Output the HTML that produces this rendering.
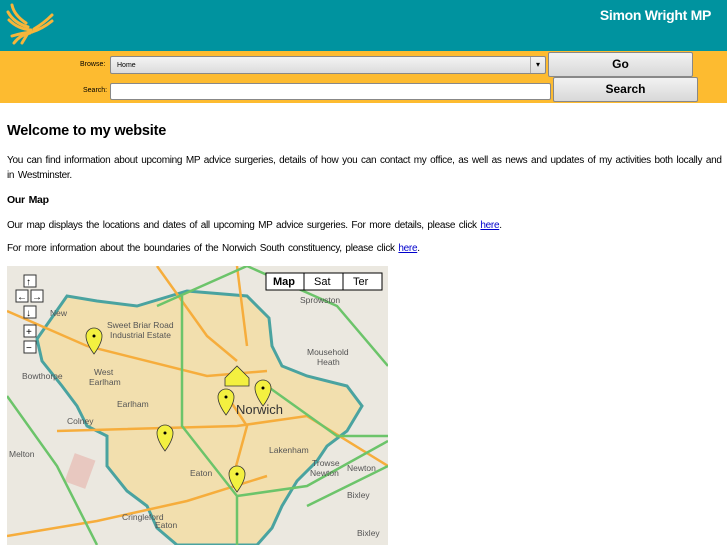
<!DOCTYPE html>
<html><head><meta charset="utf-8"><style>
*{margin:0;padding:0;box-sizing:border-box}
body{width:727px;height:545px;overflow:hidden;background:#fff;font-family:"Liberation Sans",sans-serif;color:#000;position:relative}
#hd{position:absolute;left:0;top:0;width:727px;height:51px;background:#00939f}
#hd .t{position:absolute;right:16px;top:7px;color:#fff;font-weight:bold;font-size:14px;letter-spacing:-0.3px}
#bar{position:absolute;left:0;top:51px;width:727px;height:52px;background:#fdbb30}
.lab{position:absolute;font-size:7px;right:620px}
.sel{position:absolute;left:110px;top:5px;width:436px;height:18px;background:linear-gradient(#f4f4f4,#dcdcdc);border:1px solid #888;border-radius:2px;font-size:7px;padding:5px 6px}
.sel .ar{position:absolute;right:0;top:0;width:15px;height:16px;border-left:1px solid #aaa;font-size:8px;text-align:center;line-height:16px}
.inp{position:absolute;left:110px;top:32px;width:441px;height:17px;background:#fff;border:1px solid #888;border-radius:2px}
.btn{position:absolute;height:25px;background:linear-gradient(#f2f2f2,#d8d8d8);border:1px solid #888;border-radius:2px;font-size:12px;font-weight:bold;text-align:center;line-height:23px}
h1{position:absolute;top:123px;left:7px;font-size:14.5px;letter-spacing:-0.2px}
p{position:absolute;left:7px;font-size:10px;line-height:15px;letter-spacing:-0.3px;word-spacing:1.2px;width:725px;white-space:nowrap}
a{color:#00c}
</style></head><body>
<div id="hd">
<svg width="54" height="46" viewBox="0 0 54 46" style="position:absolute;left:2px;top:1px">
<g fill="none" stroke="#f7b53a" stroke-width="3" stroke-linecap="round">
<path d="M10 4 Q12 14 24 22"/><path d="M6 11 Q12 22 26 26"/><path d="M7 19 Q16 28 29 29"/>
<path d="M50 14 Q42 22 32 28"/><path d="M50 20 Q40 28 30 31"/>
<path d="M30 31 Q20 32 10 35"/><path d="M28 32 Q18 34 12 42"/><path d="M26 32 L20 42"/>
</g></svg>
<div class="t">Simon Wright MP</div></div>
<div id="bar">
<div class="lab" style="top:10px;left:80px">Browse:</div>
<div class="sel">Home<div class="ar">▾</div></div>
<div class="btn" style="left:548px;top:1px;width:145px">Go</div>
<div class="lab" style="top:36px;left:83px">Search:</div>
<div class="inp"></div>
<div class="btn" style="left:553px;top:26px;width:145px">Search</div>
</div>
<h1>Welcome to my website</h1>
<p style="top:153px">You can find information about upcoming MP advice surgeries, details of how you can contact my office, as well as news and updates of my activities both locally and<br>in Westminster.</p>
<p style="top:193px;font-weight:bold;font-size:10.5px">Our Map</p>
<p style="top:218px">Our map displays the locations and dates of all upcoming MP advice surgeries. For more details, please click <a href="#">here</a>.</p>
<p style="top:241px">For more information about the boundaries of the Norwich South constituency, please click <a href="#">here</a>.</p>
<svg width="381" height="279" viewBox="0 0 381 279" style="position:absolute;left:7px;top:266px" font-family="Liberation Sans" font-size="8.5" fill="#555">
<rect width="381" height="279" fill="#ebe8e0"/>
<rect x="62" y="190" width="22" height="30" fill="#e8c8c0" transform="rotate(20 73 205)"/>
<path d="M30 73 L60 30 L90 35 L130 40 L180 25 L240 30 L262 52 L265 80 L275 100 L300 110 L340 120 L355 140 L340 165 L320 180 L310 195 L290 215 L275 240 L265 262 L250 279 L170 279 L150 262 L140 240 L120 225 L100 200 L100 170 L80 160 L70 140 L55 120 L35 95 Z" fill="#f2dfae" stroke="#4aa3a0" stroke-width="3"/>
<g fill="none" stroke="#f6ad3c" stroke-width="2.5">
<path d="M0 45 L80 80 L200 110 L260 105"/><path d="M50 165 L230 160 L300 150 L381 200"/>
<path d="M0 270 L90 255 L180 235 L260 210"/><path d="M150 0 L200 70 L230 95"/><path d="M230 0 L240 80"/>
<path d="M220 130 L240 160 L225 215"/>
</g>
<g fill="none" stroke="#6cc46a" stroke-width="2.5">
<path d="M0 130 L50 200 L90 279"/><path d="M175 30 L175 160 L230 230 L230 279"/><path d="M150 40 L240 0 L330 40 L381 100"/><path d="M230 230 L300 220 L381 175"/><path d="M300 240 L381 200"/><path d="M260 120 L330 170 L381 170"/>
</g>
<rect x="259" y="7" width="116" height="17" fill="#fff" stroke="#000"/>
<line x1="297" y1="7" x2="297" y2="24" stroke="#000"/><line x1="336" y1="7" x2="336" y2="24" stroke="#000"/>
<text x="266" y="19" font-size="11" font-weight="bold" fill="#000">Map</text><text x="307" y="19" font-size="11" fill="#000">Sat</text><text x="346" y="19" font-size="11" fill="#000">Ter</text>
<g fill="#fff" stroke="#333"><rect x="17" y="9" width="12" height="12"/><rect x="9" y="24" width="12" height="12"/><rect x="24" y="24" width="12" height="12"/><rect x="17" y="40" width="12" height="12"/><rect x="17" y="59" width="12" height="12"/><rect x="17" y="75" width="12" height="12"/></g>
<g fill="#000" font-size="10"><text x="19" y="19">↑</text><text x="10" y="34">←</text><text x="25" y="34">→</text><text x="19" y="50">↓</text><text x="19" y="69">+</text><text x="19" y="85">−</text></g>
<text x="100" y="62">Sweet Briar Road</text><text x="103" y="72">Industrial Estate</text><text x="293" y="37">Sprowston</text><text x="300" y="89">Mousehold</text><text x="310" y="99">Heath</text>
<text x="15" y="113">Bowthorpe</text><text x="87" y="109">West</text><text x="82" y="119">Earlham</text><text x="110" y="141">Earlham</text><text x="60" y="158">Colney</text>
<text x="2" y="191">Melton</text><text x="183" y="210">Eaton</text><text x="262" y="187">Lakenham</text><text x="305" y="200">Trowse</text><text x="303" y="210">Newton</text>
<text x="115" y="254">Cringleford</text><text x="148" y="262">Eaton</text><text x="340" y="232">Bixley</text><text x="350" y="270">Bixley</text><text x="340" y="205">Newton</text>
<text x="229" y="148" font-size="13" fill="#333">Norwich</text><text x="43" y="50">New</text>
<g fill="#f3f040" stroke="#333" stroke-width="0.8">
<path d="M79 70 a8 8 0 0 1 16 0 Q95 77 87 88 Q79 77 79 70Z"/>
<path d="M211 131 a8 8 0 0 1 16 0 Q227 138 219 149 Q211 138 211 131Z"/>
<path d="M248 122 a8 8 0 0 1 16 0 Q264 129 256 140 Q248 129 248 122Z"/>
<path d="M150 167 a8 8 0 0 1 16 0 Q166 174 158 185 Q150 174 150 167Z"/>
<path d="M222 208 a8 8 0 0 1 16 0 Q238 215 230 226 Q222 215 222 208Z"/>
<path d="M218 112 L230 100 L242 112 L242 120 L218 120Z"/>
</g>
<g fill="#000"><circle cx="87" cy="70" r="1.5"/><circle cx="219" cy="131" r="1.5"/><circle cx="256" cy="122" r="1.5"/><circle cx="158" cy="167" r="1.5"/><circle cx="230" cy="208" r="1.5"/></g>
</svg>
</body></html>
